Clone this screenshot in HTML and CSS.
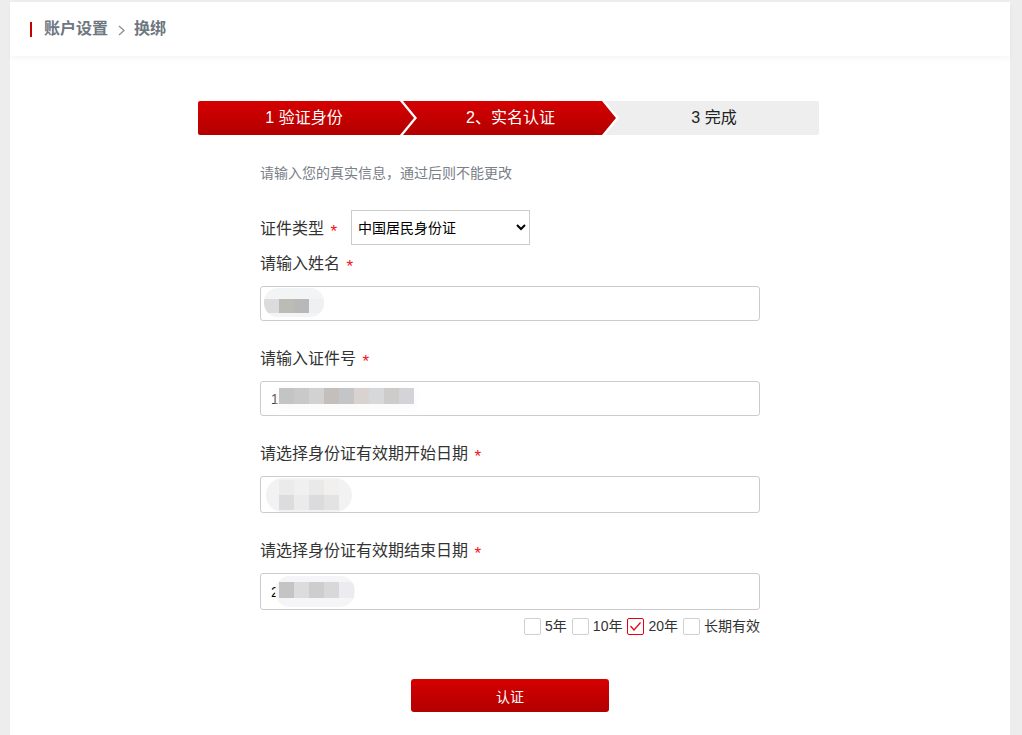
FILE: index.html
```html
<!DOCTYPE html>
<html lang="zh-CN">
<head>
<meta charset="utf-8">
<title>换绑</title>
<link rel="stylesheet" href="styles.css">
</head>
<body>
<div class="panel">
  <div class="header">
    <span class="bar"></span>
    <span class="crumb">账户设置</span>
    <svg class="chev" width="7" height="11" viewBox="0 0 7 11"><polyline points="1,1 6,5.5 1,10" fill="none" stroke="#8a8f96" stroke-width="1.3"/></svg>
    <span class="crumb">换绑</span>
  </div>

  <div class="main">
    <div class="steps">
      <div class="step step-first">1 验证身份</div>
      <div class="step step-mid">2、实名认证</div>
      <div class="step step-last">3 完成</div>
    </div>

    <div class="form">
      <p class="hint">请输入您的真实信息，通过后则不能更改</p>

      <div class="type-row">
        <span class="label">证件类型 <span class="req">*</span></span>
        <select class="select">
          <option>中国居民身份证</option>
        </select>
      </div>

      <div class="label label-block">请输入姓名 <span class="req">*</span></div>
      <div class="field">
        <input class="input" type="text" value="">
        <span class="mask mask-name"></span>
      </div>

      <div class="label label-block">请输入证件号 <span class="req">*</span></div>
      <div class="field">
        <input class="input" type="text" value="1">
        <span class="mask mask-id"></span>
      </div>

      <div class="label label-block">请选择身份证有效期开始日期 <span class="req">*</span></div>
      <div class="field">
        <input class="input input-date" type="text" value="">
        <span class="mask mask-start"></span>
      </div>

      <div class="label label-block">请选择身份证有效期结束日期 <span class="req">*</span></div>
      <div class="field">
        <input class="input input-date" type="text" value="2">
        <span class="mask mask-end"></span>
      </div>

      <div class="periods">
        <label class="period"><span class="box"></span>5年</label>
        <label class="period"><span class="box"></span>10年</label>
        <label class="period"><span class="box box-on"><svg width="15" height="15" viewBox="0 0 15 15"><polyline points="2.5,7 6,11 12.5,3.5" fill="none" stroke="#e60012" stroke-width="1.2"/></svg></span>20年</label>
        <label class="period"><span class="box"></span>长期有效</label>
      </div>

      <div class="actions">
        <button class="btn" type="button">认证</button>
      </div>
    </div>
  </div>
</div>
</body>
</html>
```

FILE: styles.css
```css
* { box-sizing: border-box; }

html, body {
  margin: 0;
  padding: 0;
  background: #ededed;
  font-family: "Liberation Sans", "Noto Sans CJK SC", sans-serif;
  color: #333;
}

.panel {
  margin: 2px 0 0 10px;
  width: 1000px;
  min-height: 733px;
  background: #fff;
}

.header {
  height: 54px;
  display: flex;
  align-items: center;
  padding-left: 20px;
  box-shadow: 0 3px 5px rgba(0, 0, 0, 0.035);
  position: relative;
}

.bar {
  width: 2px;
  height: 15px;
  background: #c80000;
  margin-right: 12px;
}

.crumb {
  font-size: 16px;
  font-weight: bold;
  color: #6e7680;
  line-height: 20px;
}

.chev {
  margin: 2px 9px 0 10px;
}

.main {
  padding-top: 45px;
}

.steps {
  display: flex;
  margin-left: 188px;
  height: 34px;
}

.step {
  height: 34px;
  line-height: 34px;
  font-size: 16px;
  text-align: center;
  color: #fff;
  background: linear-gradient(to bottom, #d60000, #b20000);
}

.step-first {
  width: 216px;
  border-radius: 2px 0 0 2px;
  clip-path: polygon(0 0, calc(100% - 14px) 0, 100% 50%, calc(100% - 14px) 100%, 0 100%);
  padding-right: 4px;
}

.step-mid {
  width: 213px;
  margin-left: -11px;
  clip-path: polygon(0 0, calc(100% - 14px) 0, 100% 50%, calc(100% - 14px) 100%, 0 100%, 14px 50%);
  padding-left: 2px;
}

.step-last {
  width: 214px;
  margin-left: -11px;
  background: #eeeeee;
  color: #222;
  border-radius: 0 2px 2px 0;
  clip-path: polygon(0 0, 100% 0, 100% 100%, 0 100%, 14px 50%);
  padding-left: 4px;
}

.form {
  width: 500px;
  margin: 0 auto;
}

.hint {
  margin: 28px 0 0;
  font-size: 14px;
  line-height: 20px;
  color: #7a8088;
}

.type-row {
  margin-top: 27px;
  display: flex;
  align-items: center;
  height: 35px;
}

.label {
  font-size: 16px;
  line-height: 20px;
  height: 20px;
  color: #333;
}

.type-row .label {
  margin-right: 14px;
  margin-top: 2px;
}

.req {
  color: #f01020;
  margin-left: 2px;
  font-size: 17px;
  line-height: 0;
  vertical-align: -3px;
}

.select {
  width: 179px;
  height: 35px;
  border: 1px solid #ccc;
  border-radius: 0;
  background: #fff;
  font-family: "Liberation Sans", "Noto Sans CJK SC", sans-serif;
  font-size: 14px;
  color: #000;
  padding: 0 2px;
}

.label-block {
  margin-top: 28px;
}

.type-row + .label-block {
  margin-top: 9px;
}

.field {
  position: relative;
  margin-top: 12px;
}

.input {
  display: block;
  width: 500px;
  height: 35px;
  border: 1px solid #ccc;
  border-radius: 3px;
  padding: 0 10px;
  font-family: "Liberation Sans", "Noto Sans CJK SC", sans-serif;
  font-size: 14px;
  color: #000;
  background: #fff;
  outline: none;
}

.input-date {
  height: 37px;
}

.mask {
  position: absolute;
}

.mask-name {
  left: 4px;
  top: 2px;
  width: 60px;
  height: 29px;
  border-radius: 14px;
  background:
    linear-gradient(to right, #dcdcdc 0 15px, #bcbcb7 15px 30px, #b8b8b8 30px 45px, #eff0f1 45px 60px) 0 11px / 60px 14px no-repeat,
    #f3f4f5;
}

.mask-id {
  left: 19px;
  top: 7px;
  width: 135px;
  height: 16px;
  background: linear-gradient(to right,
    #c4c4c5 0 15px, #c9c9c9 15px 30px, #d1d2d1 30px 45px, #c5bfbc 45px 60px,
    #c3c5c8 60px 75px, #d8d3d0 75px 90px, #d6d8d9 90px 105px, #cecccb 105px 120px, #d3d3d8 120px 135px);
  box-shadow: 0 3px 6px 3px #fbfbfb;
}

.mask-start {
  left: 6px;
  top: 2px;
  width: 86px;
  height: 34px;
  border-radius: 17px;
  background:
    linear-gradient(to right, #ebebeb 0 15px, #f0f0f0 15px 30px, #e9e9ea 30px 45px, #f1f0ef 45px 60px) 13px 2px / 60px 15px no-repeat,
    linear-gradient(to right, #dcdcde 0 15px, #ebebeb 15px 30px, #dbdbdd 30px 45px, #e3e3e3 45px 60px) 13px 17px / 60px 15px no-repeat,
    #f2f2f3;
}

.mask-end {
  left: 15px;
  top: 3px;
  width: 80px;
  height: 31px;
  border-radius: 15px;
  background:
    linear-gradient(to right, #c4c4c4 0 15px, #dcdcdc 15px 30px, #cdcdcd 30px 45px, #d8d8d8 45px 60px, #ececf0 60px 75px) 4px 6px / 75px 16px no-repeat,
    #f5f5f7;
}

.periods {
  display: flex;
  justify-content: flex-end;
  align-items: center;
  gap: 5px;
  margin-top: 7px;
  height: 18px;
}

.period {
  display: flex;
  align-items: center;
  gap: 4px;
  font-size: 14px;
  line-height: 18px;
  color: #333;
}

.box {
  width: 17px;
  height: 17px;
  border: 1px solid #d0d0d0;
  border-radius: 2px;
  background: #fff;
  display: flex;
  align-items: center;
  justify-content: center;
}

.box-on {
  border-color: #e60012;
}

.actions {
  display: flex;
  justify-content: center;
  margin-top: 44px;
}

.btn {
  width: 198px;
  height: 33px;
  border: none;
  border-radius: 3px;
  background: linear-gradient(to bottom, #d60000, #b20000);
  color: #fff;
  font-family: "Liberation Sans", "Noto Sans CJK SC", sans-serif;
  font-size: 14px;
  cursor: pointer;
}
```
